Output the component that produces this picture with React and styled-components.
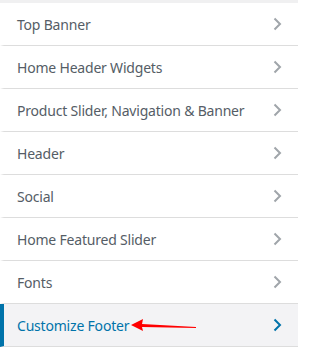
import React from 'react';
import styled, { createGlobalStyle } from 'styled-components';

const GlobalStyle = createGlobalStyle`
  *, *::before, *::after {
    box-sizing: border-box;
  }
  html, body {
    margin: 0;
    padding: 0;
    background: #fff;
    overflow: hidden;
  }
  body {
    font-family: "Noto Sans", "Open Sans", sans-serif;
  }
`;

const Panel = styled.ul`
  list-style: none;
  margin: 0;
  padding: 3px 0 0;
  width: 298px;
  height: 348px;
  overflow: hidden;
  background: #fff;
  box-shadow: inset 0 3px 0 #f0f0f1;
`;

const Section = styled.li`
  position: relative;
  display: flex;
  align-items: center;
  justify-content: space-between;
  height: 43px;
  padding: 0 16px 0 13px;
  border-left: 4px solid ${(p) => (p.$active ? '#0073aa' : '#fff')};
  border-bottom: 1px solid #dddddd;
  background: ${(p) => (p.$active ? '#f3f3f5' : '#fff')};
  color: ${(p) => (p.$active ? '#0073aa' : '#555d66')};
  font-size: 14px;
  line-height: 21px;
  letter-spacing: -0.2px;
  cursor: pointer;
`;

const Title = styled.span`
  white-space: nowrap;
`;

const Chevron = styled.svg`
  flex: none;
  width: 9px;
  height: 14px;
`;

const Pointer = styled.svg`
  position: absolute;
  left: 125px;
  top: 12px;
  width: 70px;
  height: 14px;
  overflow: visible;
`;

const sections = [
  'Top Banner',
  'Home Header Widgets',
  'Product Slider, Navigation & Banner',
  'Header',
  'Social',
  'Home Featured Slider',
  'Fonts',
  'Customize Footer',
];

const App = () => {
  return (
    <>
      <GlobalStyle />
      <Panel>
        {sections.map((name, i) => {
          const active = i === sections.length - 1;
          return (
            <Section key={name} $active={active}>
              <Title>{name}</Title>
              {active && (
                <Pointer viewBox="0 0 70 14">
                  <polygon points="2,9 14,3 13,8 67,11 67,12 13,11 14,15" fill="#f00" />
                </Pointer>
              )}
              <Chevron viewBox="0 0 9 14">
                <polyline
                  points="1.5,1.5 7,7 1.5,12.5"
                  fill="none"
                  stroke={active ? '#0073aa' : '#a0a5aa'}
                  strokeWidth="2"
                />
              </Chevron>
            </Section>
          );
        })}
      </Panel>
    </>
  );
};

export default App;
